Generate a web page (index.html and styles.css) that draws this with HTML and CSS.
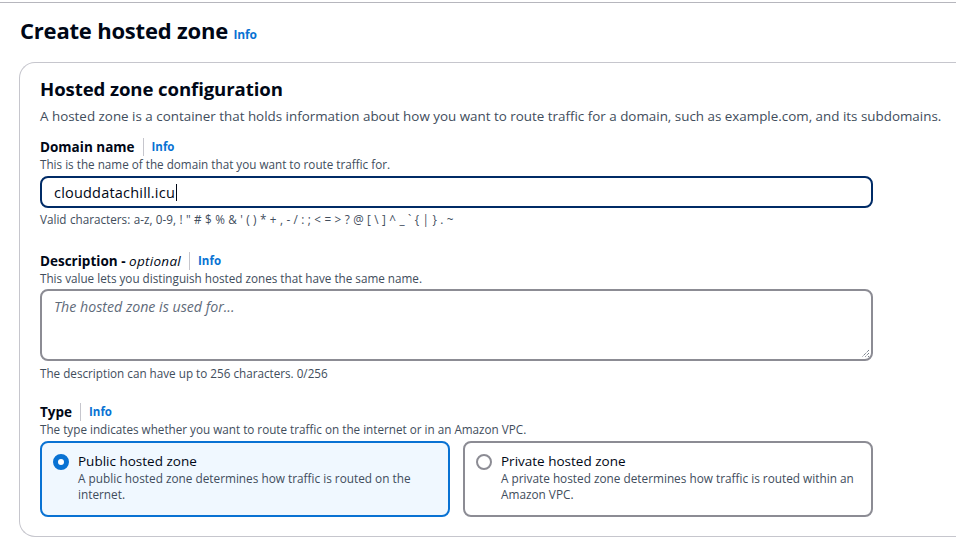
FILE: index.html
```html
<!DOCTYPE html>
<html>
<head>
<meta charset="utf-8">
<link rel="stylesheet" href="styles.css">
</head>
<body>
<div class="topline"></div>
<main class="page">
  <h1 class="page-title">Create hosted zone <a class="info info-title">Info</a></h1>
  <section class="card">
    <h2 class="card-title">Hosted zone configuration</h2>
    <p class="card-desc">A hosted zone is a container that holds information about how you want to route traffic for a domain, such as example.com, and its subdomains.</p>

    <div class="field field-domain">
      <div class="label-row"><span class="label">Domain name</span><span class="sep"></span><a class="info">Info</a></div>
      <div class="hint">This is the name of the domain that you want to route traffic for.</div>
      <div class="input focused"><span>clouddatachill.icu</span><span class="caret"></span></div>
      <div class="hint hint-valid">Valid characters: a-z, 0-9, ! " # $ % &amp; ' ( ) * + , - / : ; &lt; = &gt; ? @ [ \ ] ^ _ ` { | } . ~</div>
    </div>

    <div class="field field-desc">
      <div class="label-row"><span class="label">Description - <i class="opt">optional</i></span><span class="sep"></span><a class="info">Info</a></div>
      <div class="hint">This value lets you distinguish hosted zones that have the same name.</div>
      <div class="textarea"><span class="placeholder">The hosted zone is used for...</span>
        <svg class="grip" width="9" height="9" viewBox="0 0 9 9"><path d="M8 1 L1 8 M8 4 L4 8 M8 7 L7 8" stroke="#414d5c" stroke-width="1" stroke-dasharray="1 1" fill="none"/></svg>
      </div>
      <div class="hint hint-count">The description can have up to 256 characters. 0/256</div>
    </div>

    <div class="field field-type">
      <div class="label-row"><span class="label">Type</span><span class="sep"></span><a class="info">Info</a></div>
      <div class="hint">The type indicates whether you want to route traffic on the internet or in an Amazon VPC.</div>
      <div class="tiles">
        <div class="tile selected">
          <span class="radio on"></span>
          <div class="tile-body">
            <div class="tile-title">Public hosted zone</div>
            <div class="tile-desc">A public hosted zone determines how traffic is routed on the internet.</div>
          </div>
        </div>
        <div class="tile">
          <span class="radio"></span>
          <div class="tile-body">
            <div class="tile-title">Private hosted zone</div>
            <div class="tile-desc">A private hosted zone determines how traffic is routed within an Amazon VPC.</div>
          </div>
        </div>
      </div>
    </div>
  </section>
</main>
</body>
</html>
```
FILE: styles.css
```css
* { box-sizing: border-box; }
html, body { margin: 0; padding: 0; background: #fff; }
body {
  font-family: "Open Sans", "Noto Sans", sans-serif;
  color: #000716;
  width: 956px;
  height: 539px;
  overflow: hidden;
}
.topline { height: 3px; border-bottom: 1px solid #b6b6bd; }
.page { padding: 0 0 0 19px; }
.page-title {
  margin: 11px 0 0 1px;
  font-size: 22px;
  font-weight: 700;
  line-height: 32px;
  letter-spacing: -0.2px;
  color: #000716;
}
.info {
  color: #0972d3;
  font-size: 11.5px;
  font-weight: 700;
  text-decoration: none;
}
.info-title { margin-left: 0; font-size: 12px; }
.card {
  margin-top: 11px;
  width: 960px;
  height: 475px;
  border: 1px solid #c6c6cd;
  border-right: none;
  border-radius: 16px 0 0 16px;
  padding: 13px 20px 0 20px;
}
.card-title {
  margin: 0;
  font-size: 18.6px;
  font-weight: 700;
  line-height: 26px;
  letter-spacing: -0.1px;
}
.card-desc {
  margin: 5px 0 0 0;
  font-size: 13.4px;
  line-height: 18px;
  color: #414d5c;
  white-space: nowrap;
}
.field { width: 833px; }
.field-domain { margin-top: 11px; }
.field-desc { margin-top: 23px; }
.field-type { margin-top: 20px; }
.label-row { display: flex; align-items: center; height: 21px; }
.label { font-size: 13.5px; font-weight: 700; }
.opt { font-weight: 400; letter-spacing: 0.3px; }
.sep { width: 1px; height: 18px; background: #c6c6cd; margin: 0 8px 0 8px; }
.hint { font-size: 11.7px; line-height: 15px; color: #414d5c; }
.hint-valid { margin-top: 4px; word-spacing: 0.4px; }
.hint-count { margin-top: 5px; }
.input {
  margin-top: 4px;
  height: 32px;
  border: 2px solid #002b66;
  border-radius: 8px;
  padding: 0 12px;
  display: flex;
  align-items: center;
  font-size: 14.5px;
  letter-spacing: 0.2px;
  color: #000716;
}
.caret { width: 1px; height: 17px; background: #000716; margin-left: 1px; }
.textarea {
  position: relative;
  margin-top: 3px;
  height: 72px;
  border: 2px solid #8c8c94;
  border-radius: 8px;
  padding: 4px 12px;
}
.placeholder { font-size: 14.2px; font-style: italic; color: #5f6b7a; }
.grip { position: absolute; right: 1px; bottom: 1px; }
.tiles { display: flex; gap: 13px; margin-top: 4px; }
.tile {
  flex: 1;
  height: 76px;
  border: 2px solid #8c8c94;
  border-radius: 8px;
  display: flex;
  padding: 9px 12px 0 11px;
  gap: 9px;
}
.tile.selected { border-color: #0972d3; background: #f0f8ff; }
.radio {
  flex: none;
  width: 16px; height: 16px;
  border-radius: 50%;
  border: 2px solid #8c8c94;
  margin-top: 2px;
}
.radio.on { border: 5px solid #0972d3; background: #fff; }
.tile-title { font-size: 13.5px; line-height: 18px; }
.tile-desc { font-size: 11.8px; line-height: 16px; color: #414d5c; margin-top: 0; }
```
